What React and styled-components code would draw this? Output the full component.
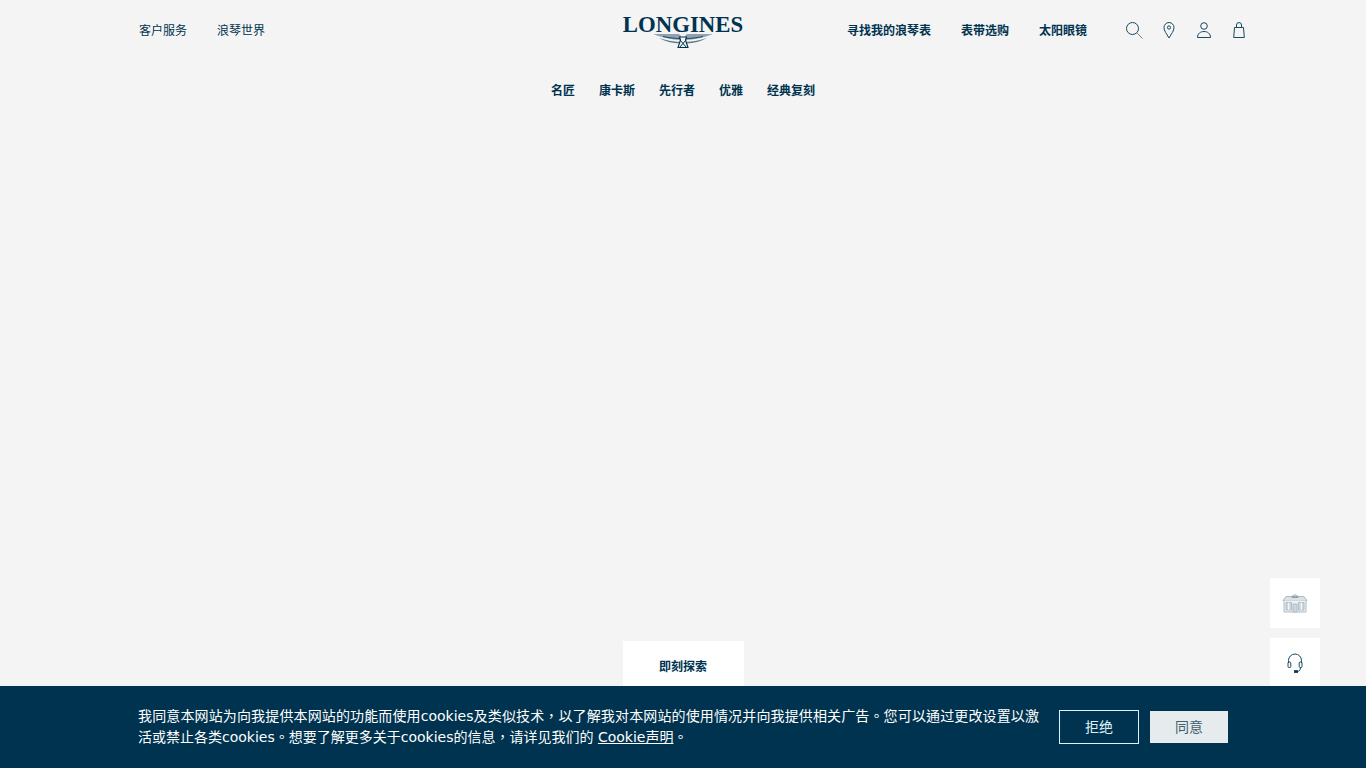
import React from "react";
import styled, { createGlobalStyle } from "styled-components";

const navy = "#00334f";

const GlobalStyle = createGlobalStyle`
  html, body {
    margin: 0;
    padding: 0;
    height: 100%;
    overflow: hidden;
    background: #f4f4f4;
    font-family: "DejaVu Sans", "Noto Sans CJK SC", sans-serif;
  }
  * { box-sizing: border-box; }
`;

const Page = styled.div`
  height: 768px;
  display: flex;
  flex-direction: column;
  background: #f4f4f4;
  color: ${navy};
`;

const Header = styled.header`
  height: 60px;
  padding: 0 117px;
  display: grid;
  grid-template-columns: 1fr auto 1fr;
  align-items: center;
`;

const LeftLinks = styled.nav`
  display: flex;
  gap: 30px;
  margin-left: 22px;
`;

const RightSide = styled.div`
  display: flex;
  justify-content: flex-end;
  align-items: center;
`;

const RightLinks = styled.nav`
  display: flex;
  gap: 30px;
  margin-right: 37px;
`;

const Link = styled.a`
  display: block;
  padding-top: 2px;
  font-size: 12px;
  line-height: 18px;
  font-weight: ${(p) => (p.$bold ? 700 : 400)};
  color: ${navy};
  white-space: nowrap;
`;

const Logo = styled.div`
  width: 120px;
  padding-top: 4px;
  display: flex;
  flex-direction: column;
  align-items: center;
`;

const LogoText = styled.div`
  font-family: "Liberation Serif", serif;
  font-weight: 700;
  font-size: 22.8px;
  line-height: 16px;
  color: ${navy};
  white-space: nowrap;
`;

const IconRow = styled.div`
  display: flex;
  gap: 15px;
`;

const IconBox = styled.span`
  width: 20px;
  height: 20px;
  display: block;
  svg { display: block; }
`;

const MainNav = styled.nav`
  height: 60px;
  display: flex;
  justify-content: center;
  align-items: center;
  gap: 24px;
`;

const Hero = styled.main`
  flex: 1;
  display: flex;
  flex-direction: column;
  justify-content: flex-end;
  align-items: center;
`;

const Explore = styled.a`
  width: 121px;
  height: 52px;
  margin-bottom: 75px;
  padding-bottom: 3px;
  background: #fff;
  display: flex;
  align-items: center;
  justify-content: center;
  font-size: 12px;
  font-weight: 700;
  color: ${navy};
`;

const FloatStack = styled.div`
  position: fixed;
  right: 46px;
  top: 578px;
  display: flex;
  flex-direction: column;
  gap: 10px;
`;

const FloatButton = styled.button`
  width: 50px;
  height: 50px;
  border: 0;
  padding: 0;
  background: #fff;
  display: flex;
  align-items: center;
  justify-content: center;
`;

const CookieBar = styled.div`
  position: fixed;
  left: 0;
  right: 0;
  bottom: 0;
  height: 82px;
  background: ${navy};
  padding: 20px 138px 0 138px;
  display: flex;
  align-items: flex-start;
  color: #fff;
`;

const CookieText = styled.p`
  margin: 0 20px 0 0;
  width: 901px;
  flex: none;
  font-family: "DejaVu Sans", "Noto Sans CJK TC", sans-serif;
  font-size: 14px;
  line-height: 21px;
  text-align: justify;
`;

const CookieLink = styled.a`
  color: #fff;
  text-decoration: underline;
`;

const CookieButtons = styled.div`
  display: flex;
  align-items: center;
  gap: 11px;
  margin-top: 4px;
`;

const CookieButton = styled.button`
  width: ${(p) => (p.$primary ? "78px" : "80px")};
  height: ${(p) => (p.$primary ? "32px" : "34px")};
  padding: 0 0 3px;
  border: ${(p) => (p.$primary ? "0" : "1px solid #dff1f8")};
  background: ${(p) => (p.$primary ? "#e6ebee" : "transparent")};
  color: ${(p) => (p.$primary ? "#3f5f73" : "#dff1f8")};
  font-family: inherit;
  font-size: 14px;
`;

const Wings = () => (
  <svg width="60" height="15" viewBox="0 0 60 15" fill="none">
    <path d="M0 1h26l2 2v4C19 6.500 9 5 0 1zM60 1H34l-2 2v4c9-.5 19-2 28-6z" fill="#8ea3af" />
    <path d="M6 5c7 2.500 14 3.500 21 4v1.500C19 10.300 12 8.500 6 5zM54 5c-7 2.500-14 3.500-21 4v1.500c8-.2 15-2 21-5.500z" fill="#5f7d8e" />
    <path d="M10 3.500c6 1.300 12 2 18 2.200M50 3.500c-6 1.300-12 2-18 2.200" stroke={navy} strokeWidth=".8" />
    <path d="M26.500 4h7l-1 3 2.500 7.500h-10L27.500 7z" fill="#f4f4f4" stroke={navy} strokeWidth="1.100" />
    <path d="M27 7l6.500 7.500M33 7l-6.500 7.500" stroke={navy} strokeWidth="1" />
  </svg>
);

const SearchIcon = () => (
  <svg width="20" height="20" viewBox="0 0 20 20" fill="none" stroke="#1a4862" strokeWidth="1">
    <circle cx="8.500" cy="8.500" r="6" />
    <path d="M13 13l5.500 5.500" stroke="#6d8797" />
  </svg>
);

const PinIcon = () => (
  <svg width="20" height="20" viewBox="0 0 20 20" fill="none" stroke="#1a4862" strokeWidth="1">
    <path d="M10 18C7.500 13.500 5 11 5 7.500a5 5 0 0 1 10 0C15 11 12.500 13.500 10 18z" />
    <circle cx="10" cy="7.500" r="1.600" />
  </svg>
);

const UserIcon = () => (
  <svg width="20" height="20" viewBox="0 0 20 20" fill="none" stroke="#1a4862" strokeWidth="1">
    <circle cx="10" cy="6" r="3.300" />
    <path d="M3.500 17.500c0-4 3-6 6.500-6s6.500 2 6.500 6z" />
  </svg>
);

const BagIcon = () => (
  <svg width="20" height="20" viewBox="0 0 20 20" fill="none" stroke="#1a4862" strokeWidth="1">
    <path d="M5.500 7.500h9l.8 10H4.700z" />
    <path d="M7.500 7.500V5a2.500 2.500 0 0 1 5 0v2.500" />
  </svg>
);

const StoreIcon = () => (
  <svg width="26" height="20" viewBox="0 0 26 20" fill="none" stroke="#aebdc6" strokeWidth="1">
    <path d="M1 7.500l3-4h5.500L13 1.500l3.500 2H22l3 4z" fill="#dbe2e6" />
    <path d="M9.500 4h7" stroke="#7f97a5" strokeWidth="1.600" />
    <path d="M2 7.500v11.500h22V7.500" fill="#eef1f3" />
    <path d="M4 9.500h5.500v7.500H4zM16.500 9.500H22v7.500h-5.500zM11 11h4v8h-4z" fill="#ccd6dc" />
    <path d="M6.750 9.500v7.500M19.250 9.500v7.500" stroke="#fff" />
  </svg>
);

const HeadsetIcon = () => (
  <svg width="20" height="22" viewBox="0 0 20 22" fill="none" stroke="#1a4862" strokeWidth="1">
    <path d="M3.500 11V8.500a6.500 6.500 0 0 1 13 0V11" />
    <rect x="3" y="10" width="2.800" height="5.500" rx="1" />
    <rect x="14.200" y="10" width="2.800" height="5.500" rx="1" />
    <path d="M15.500 15.500c0 2.500-1.200 4-3.500 4" />
    <rect x="9.500" y="18.600" width="3" height="1.800" fill={navy} />
  </svg>
);

export default function App() {
  return (
    <Page>
      <GlobalStyle />
      <Header>
        <LeftLinks>
          <Link>客户服务</Link>
          <Link>浪琴世界</Link>
        </LeftLinks>
        <Logo>
          <LogoText>LONGINES</LogoText>
          <Wings />
        </Logo>
        <RightSide>
          <RightLinks>
            <Link $bold>寻找我的浪琴表</Link>
            <Link $bold>表带选购</Link>
            <Link $bold>太阳眼镜</Link>
          </RightLinks>
          <IconRow>
            <IconBox><SearchIcon /></IconBox>
            <IconBox><PinIcon /></IconBox>
            <IconBox><UserIcon /></IconBox>
            <IconBox><BagIcon /></IconBox>
          </IconRow>
        </RightSide>
      </Header>
      <MainNav>
        <Link $bold>名匠</Link>
        <Link $bold>康卡斯</Link>
        <Link $bold>先行者</Link>
        <Link $bold>优雅</Link>
        <Link $bold>经典复刻</Link>
      </MainNav>
      <Hero>
        <Explore>即刻探索</Explore>
      </Hero>
      <FloatStack>
        <FloatButton><StoreIcon /></FloatButton>
        <FloatButton><HeadsetIcon /></FloatButton>
      </FloatStack>
      <CookieBar>
        <CookieText>
          我同意本网站为向我提供本网站的功能而使用cookies及类似技术，以了解我对本网站的使用情况并向我提供相关广告。您可以通过更改设置以激活或禁止各类cookies。想要了解更多关于cookies的信息，请详见我们的 <CookieLink>Cookie声明</CookieLink>。
        </CookieText>
        <CookieButtons>
          <CookieButton>拒绝</CookieButton>
          <CookieButton $primary>同意</CookieButton>
        </CookieButtons>
      </CookieBar>
    </Page>
  );
}
